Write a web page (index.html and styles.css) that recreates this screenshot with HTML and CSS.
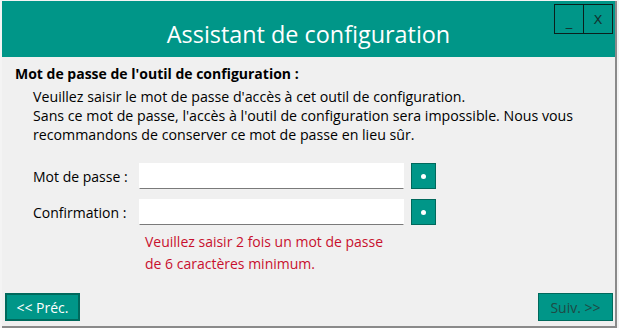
FILE: index.html
```html
<!DOCTYPE html>
<html lang="fr">
<head>
<meta charset="utf-8">
<title>Assistant de configuration</title>
<link rel="stylesheet" href="styles.css">
</head>
<body>
<div class="window">
  <header class="titlebar">
    <h1 class="title">Assistant de configuration</h1>
    <div class="controls">
      <span class="ctl">_</span>
      <span class="ctl">X</span>
    </div>
  </header>
  <main class="content">
    <h2 class="section">Mot de passe de l'outil de configuration :</h2>
    <p class="intro">Veuillez saisir le mot de passe d'accès à cet outil de configuration.<br>Sans ce mot de passe, l'accès à l'outil de configuration sera impossible. Nous vous<br>recommandons de conserver ce mot de passe en lieu sûr.</p>
    <div class="form">
      <label class="lbl">Mot de passe :</label>
      <input class="field" type="password">
      <span class="eye"><span class="dot"></span></span>
      <label class="lbl">Confirmation :</label>
      <input class="field" type="password">
      <span class="eye"><span class="dot"></span></span>
    </div>
    <p class="error">Veuillez saisir 2 fois un mot de passe<br>de 6 caractères minimum.</p>
    <div class="footer">
      <button class="btn prev">&lt;&lt; Préc.</button>
      <button class="btn next">Suiv. &gt;&gt;</button>
    </div>
  </main>
</div>
</body>
</html>
```
FILE: styles.css
```css
html, body {
  margin: 0;
  padding: 0;
  background: #f4f4f4;
}
body {
  font-family: "Open Sans", "Noto Sans", sans-serif;
  color: #000;
}
.window {
  margin: 1px 0 0 2px;
  width: 613px;
  height: 325px;
  border-right: 2px solid #8a8a8a;
  border-bottom: 2px solid #8a8a8a;
  background: #f0f0f0;
  display: flex;
  flex-direction: column;
}
.titlebar {
  position: relative;
  height: 56px;
  background: #009688;
  display: flex;
  align-items: center;
  justify-content: center;
}
.title {
  margin: 10px 0 0 0;
  font-weight: normal;
  font-size: 23.4px;
  color: #fff;
}
.controls {
  position: absolute;
  top: 3px;
  right: 2px;
  display: flex;
  border: 1px solid #0b1f1c;
}
.ctl {
  width: 28px;
  height: 28px;
  display: flex;
  align-items: center;
  justify-content: center;
  font-size: 13px;
  color: #123330;
  font-family: "DejaVu Sans", sans-serif;
}
.ctl + .ctl {
  border-left: 1px solid #0b1f1c;
}
.ctl:first-child {
  padding-top: 4px;
  box-sizing: border-box;
}
.content {
  flex: 1;
  display: flex;
  flex-direction: column;
}
.section {
  margin: 7px 0 0 13px;
  font-size: 14px;
  font-weight: bold;
  line-height: 19px;
}
.intro {
  margin: 4px 0 0 31px;
  font-size: 14.2px;
  line-height: 19px;
}
.form {
  margin: 19px 0 0 31px;
  display: grid;
  grid-template-columns: 99px 265px 25px;
  grid-auto-rows: 26px;
  column-gap: 7px;
  row-gap: 10px;
  align-items: center;
}
.lbl {
  font-size: 14px;
}
.field {
  box-sizing: border-box;
  width: 265px;
  height: 26px;
  margin: 0;
  border: 1px solid #fff;
  border-bottom: 1px solid #7a7a7a;
  background: #fff;
  outline: none;
}
.eye {
  box-sizing: border-box;
  width: 25px;
  height: 26px;
  background: #009688;
  border: 1px solid #00695c;
  display: flex;
  align-items: center;
  justify-content: center;
}
.dot {
  width: 5px;
  height: 5px;
  border-radius: 50%;
  background: #fff;
}
.error {
  margin: 6px 0 0 143px;
  font-size: 14px;
  line-height: 22px;
  color: #c8102e;
}
.footer {
  margin-top: auto;
  padding: 0 2px 5px 3px;
  display: flex;
  justify-content: space-between;
}
.btn {
  box-sizing: border-box;
  width: 75px;
  height: 28px;
  background: #009688;
  font-family: "Open Sans", "Noto Sans", sans-serif;
  font-size: 14px;
  padding: 0;
}
.prev {
  border: 2px solid #00695c;
  color: #fff;
}
.next {
  border: 1px solid #00695c;
  color: #1f4a45;
}
```
